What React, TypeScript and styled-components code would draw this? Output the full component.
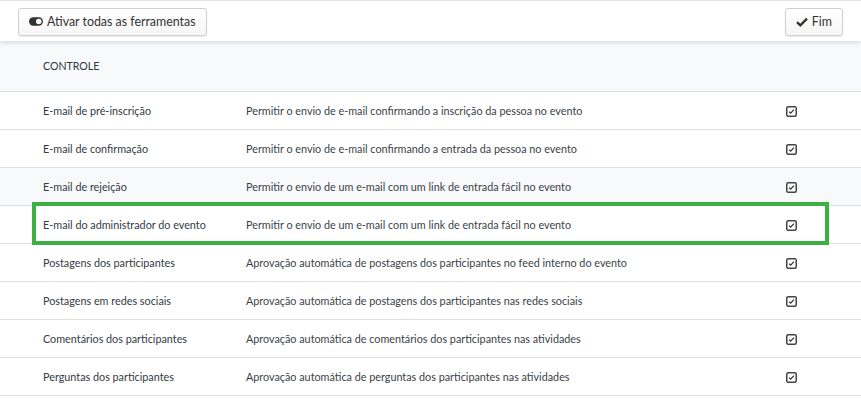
import React from "react";
import styled, { createGlobalStyle } from "styled-components";

const Global = createGlobalStyle`
  html, body { margin: 0; padding: 0; background: #fff; }
  body { font-family: Lato, "Open Sans", sans-serif; color: #333; }
  * { box-sizing: border-box; }
`;

const Page = styled.div`
  width: 861px;
  height: 402px;
  overflow: hidden;
  position: relative;
  background: #fff;
`;

const Toolbar = styled.div`
  height: 41px;
  display: flex;
  align-items: center;
  justify-content: space-between;
  padding: 0 18px 0 18px;
  border-top: 1px solid #e2e2e2;
  background: #fff;
  box-shadow: 0 2px 4px rgba(0, 0, 0, 0.12);
  position: relative;
  z-index: 1;
`;

const Button = styled.button`
  height: 28px;
  display: inline-flex;
  align-items: center;
  gap: 4px;
  padding: 0 10px;
  font-family: Lato, sans-serif;
  font-size: 12.4px;
  color: #333;
  background: linear-gradient(#fff, #f6f6f6);
  border: 1px solid #cfcfcf;
  border-radius: 3px;
  box-shadow: 0 1px 1px rgba(0, 0, 0, 0.08);
  margin-top: 1px;
`;

const Table = styled.div`
  display: flex;
  flex-direction: column;
`;

const HeaderRow = styled.div`
  height: 52px;
  display: flex;
  align-items: center;
  padding-left: 43px;
  background: #f8f9fb;
  border-bottom: 1px solid #dedede;
  font-size: 10.6px;
  color: #2e3640;
  margin-top: -1px;
`;

const Row = styled.div<{ $shade?: boolean }>`
  height: 38px;
  display: grid;
  grid-template-columns: 203px 1fr 75px;
  align-items: center;
  padding-left: 43px;
  background: ${(p) => (p.$shade ? "#f8f9fb" : "#fff")};
  border-bottom: 1px solid #dedede;
  font-size: 10.8px;
  color: #333a44;
`;

const Name = styled.div`
  white-space: nowrap;
`;

const Desc = styled.div`
  white-space: nowrap;
  color: #3a3f47;
`;

const CheckCell = styled.div`
  display: flex;
  align-items: center;
  padding-top: 1px;
`;

const Highlight = styled.div`
  position: absolute;
  left: 32px;
  top: 202px;
  width: 797px;
  height: 43px;
  border: 4px solid #3cb043;
  pointer-events: none;
`;

const ToggleIcon = () => (
  <svg width="14" height="9" viewBox="0 0 15 9">
    <rect x="0" y="0" width="15" height="9" rx="4.5" fill="#333" />
    <circle cx="10.5" cy="4.5" r="3" fill="#fff" />
  </svg>
);

const CheckIcon = () => (
  <svg width="12" height="10" viewBox="0 0 12 10">
    <path d="M1 5.2 L4.3 8.3 L11 1.6" fill="none" stroke="#333" strokeWidth="2.3" />
  </svg>
);

const CheckBox = () => (
  <svg width="11" height="11" viewBox="0 0 11 11">
    <rect x="0.75" y="0.75" width="9.5" height="9.5" rx="1.5" fill="#fff" stroke="#444" strokeWidth="1.5" />
    <path d="M3 5.6 L4.6 7.1 L8 3.6" fill="none" stroke="#333" strokeWidth="1.3" />
  </svg>
);

const rows = [
  ["E-mail de pré-inscrição", "Permitir o envio de e-mail confirmando a inscrição da pessoa no evento"],
  ["E-mail de confirmação", "Permitir o envio de e-mail confirmando a entrada da pessoa no evento"],
  ["E-mail de rejeição", "Permitir o envio de um e-mail com um link de entrada fácil no evento"],
  ["E-mail do administrador do evento", "Permitir o envio de um e-mail com um link de entrada fácil no evento"],
  ["Postagens dos participantes", "Aprovação automática de postagens dos participantes no feed interno do evento"],
  ["Postagens em redes sociais", "Aprovação automática de postagens dos participantes nas redes sociais"],
  ["Comentários dos participantes", "Aprovação automática de comentários dos participantes nas atividades"],
  ["Perguntas dos participantes", "Aprovação automática de perguntas dos participantes nas atividades"],
];

export default function App() {
  return (
    <Page>
      <Global />
      <Toolbar>
        <Button>
          <ToggleIcon />
          Ativar todas as ferramentas
        </Button>
        <Button>
          <CheckIcon />
          Fim
        </Button>
      </Toolbar>
      <Table>
        <HeaderRow>CONTROLE</HeaderRow>
        {rows.map(([n, d], i) => (
          <Row key={n} $shade={i === 2}>
            <Name>{n}</Name>
            <Desc>{d}</Desc>
            <CheckCell>
              <CheckBox />
            </CheckCell>
          </Row>
        ))}
      </Table>
      <Highlight />
    </Page>
  );
}
